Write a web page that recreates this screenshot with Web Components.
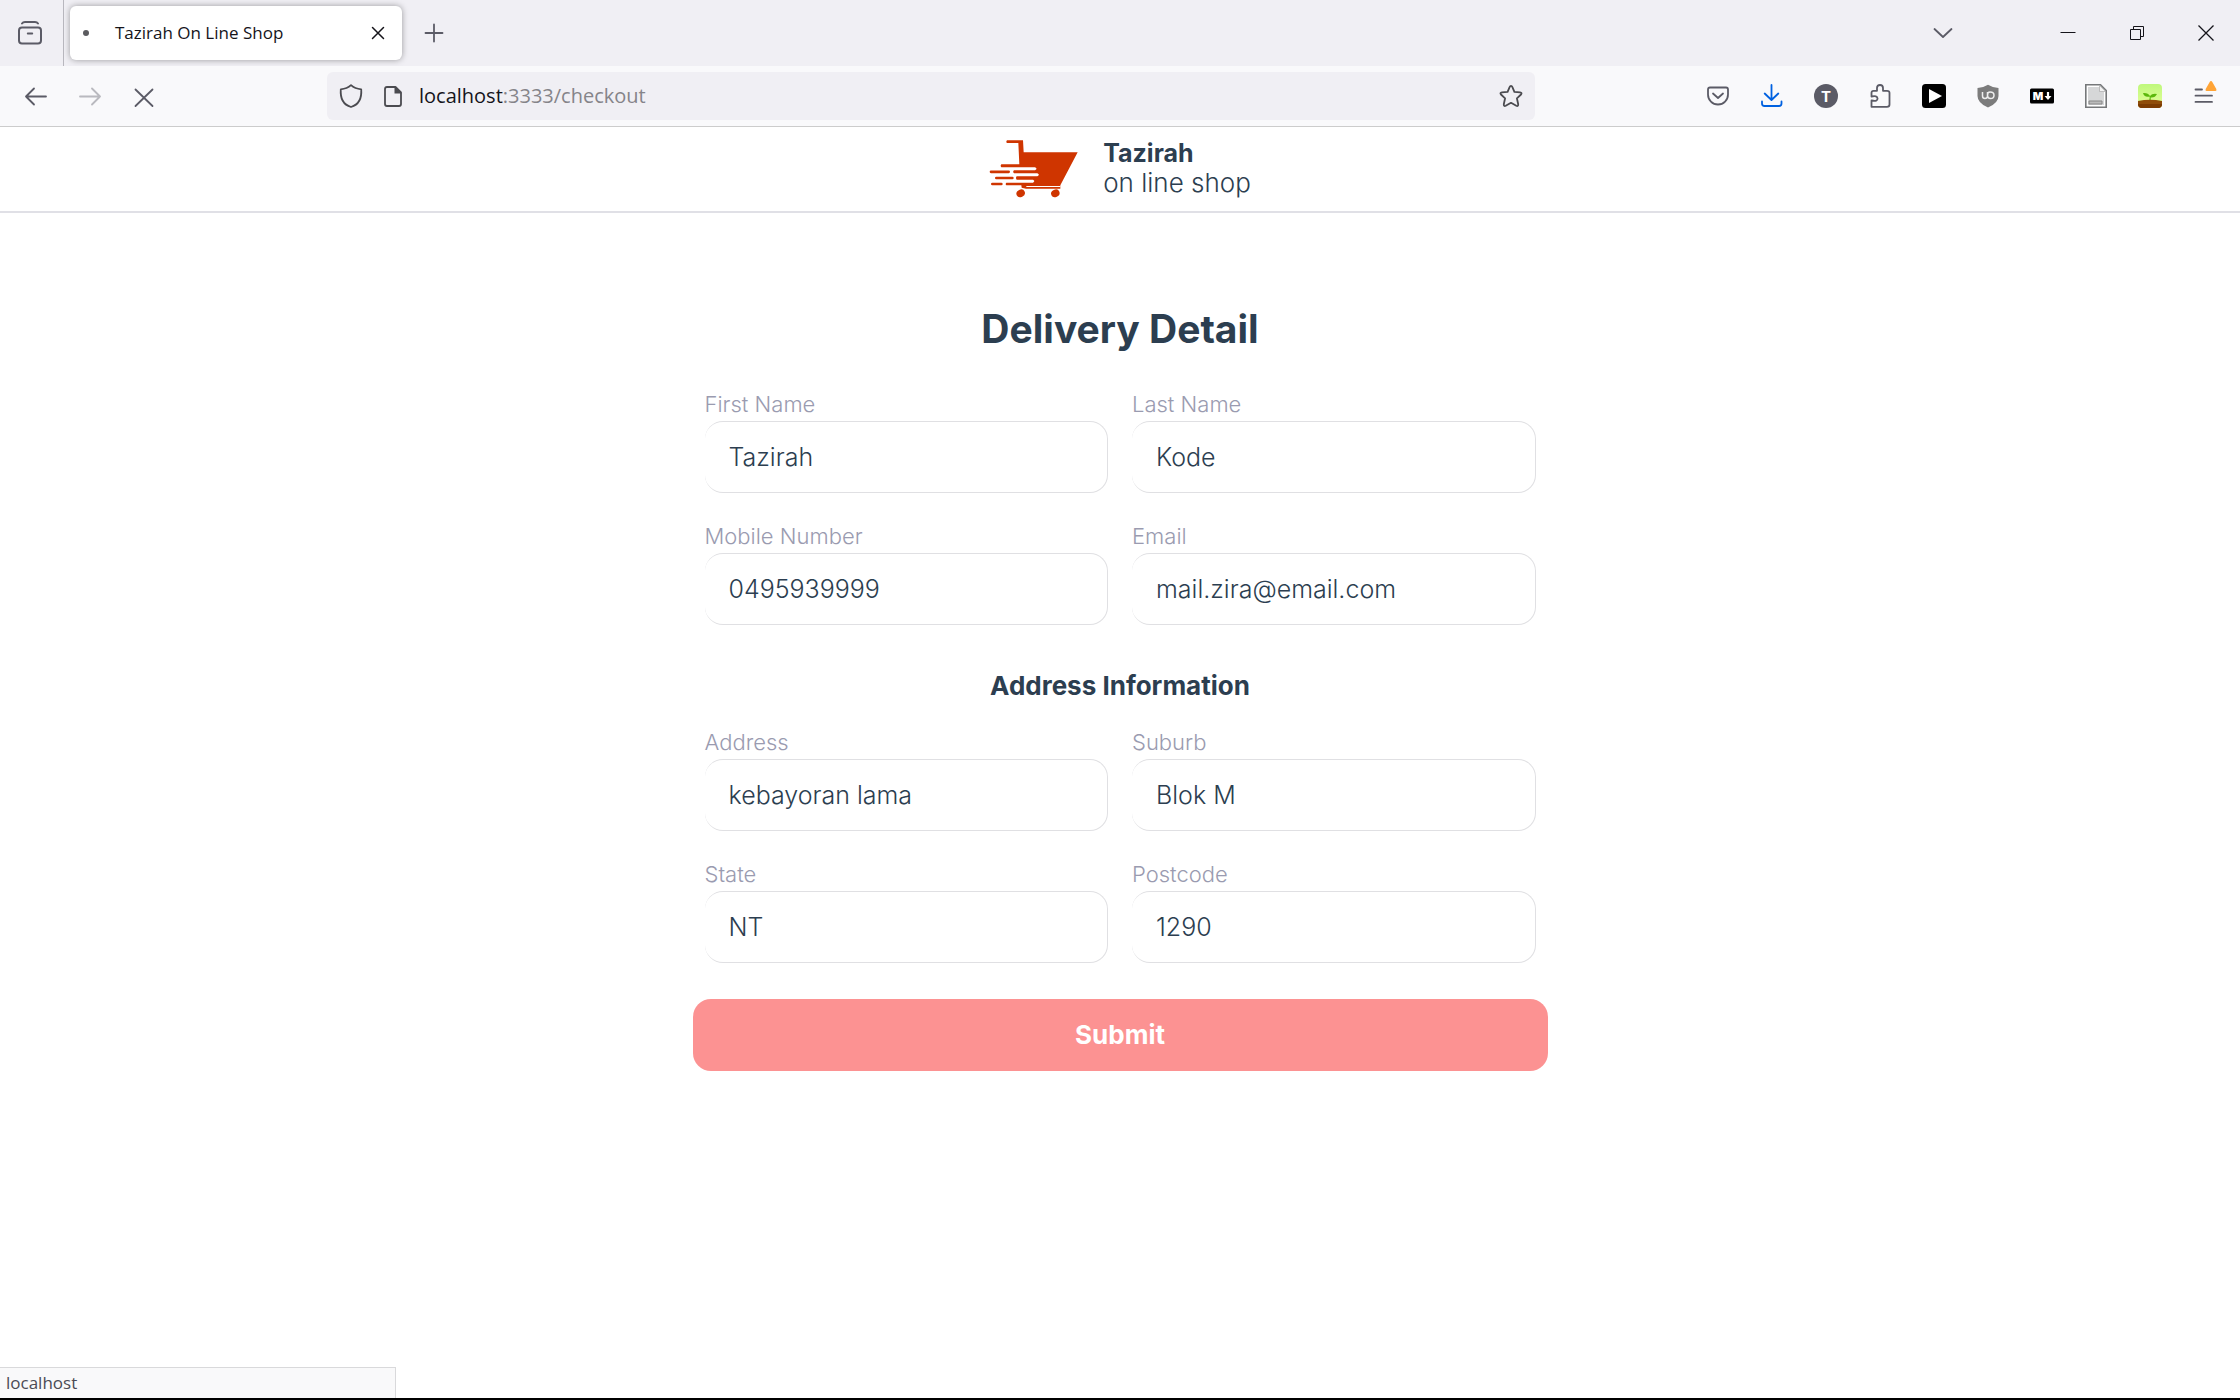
<!DOCTYPE html>
<html lang="en">
<head>
<meta charset="utf-8">
<title>Tazirah On Line Shop</title>
<style>
  html, body { margin: 0; }
  body { background: #fff; color: #2c3e50; font-family: Inter, "Liberation Sans", sans-serif; font-weight: 300; }
</style>
</head>
<body>
<browser-window>
  <tab-strip slot="tabs"><browser-tab slot="tab">Tazirah On Line Shop</browser-tab></tab-strip>
  <nav-toolbar slot="toolbar" host="localhost" path=":3333/checkout"></nav-toolbar>
  <shop-header><strong slot="name">Tazirah</strong><span slot="tagline">on line shop</span></shop-header>
  <delivery-form></delivery-form>
  <status-panel slot="status">localhost</status-panel>
</browser-window>

<script>
const define = (name, html, setup) => {
  const template = document.createElement('template');
  template.innerHTML = html;
  customElements.define(name, class extends HTMLElement {
    constructor() {
      super();
      this.attachShadow({ mode: 'open' }).append(template.content.cloneNode(true));
    }
    connectedCallback() { if (setup) setup(this, this.shadowRoot); }
  });
};

/* Every icon is drawn in a 24 x 24 box. */
const line = (d, w = 1.8) => `<path d="${d}" fill="none" stroke="currentColor" stroke-width="${w}" stroke-linecap="round" stroke-linejoin="round"/>`;
const ICONS = {
  archive: line('M1 9.500Q1 6.500 4 6.500H20Q23 6.500 23 9.500V19.500Q23 22.500 20 22.500H4Q1 22.500 1 19.500ZM4 2.500Q5 1 7 1H17Q19 1 20 2.500M9.800 12.500H14.200', 2),
  closeTab: line('M6.500 6.500L17.500 17.500M17.500 6.500L6.500 17.500', 1.5),
  plus: line('M12 3.500V20.500M3.500 12H20.500'),
  chevron: line('M3.500 8L12 16L20.500 8'),
  minimize: '<path d="M4.500 11.500H19.500" stroke="#15141a" fill="none"/>',
  restore: '<path d="M5.500 8.500H15.500V18.500H5.500ZM8.500 8.500V5.500H18.500V15.500H15.500" stroke="#15141a" fill="none"/>',
  closeWin: '<path d="M4.500 4.500L19.500 19.500M19.500 4.500L4.500 19.500" stroke="#15141a" stroke-width="1.300" fill="none"/>',
  back: line('M22 12.500H2M10 4.500L2 12.500L10 20.500'),
  forward: line('M2 12.500H22M14 4.500L22 12.500L14 20.500'),
  stop: line('M3.500 5.500L20.500 22M20.500 5.500L3.500 22'),
  shield: line('M12 1.200C9.500 3.500 5.500 5 1.800 5.300C1.200 13 3.500 20.500 12 23C20.500 20.500 22.800 13 22.200 5.300C18.500 5 14.500 3.500 12 1.200Z'),
  page: line('M14.500 3H6Q4 3 4 5V20Q4 22 6 22H18Q20 22 20 20V8.500Z') + '<path d="M13.500 2.500V9.500H20.500Z" fill="currentColor"/>',
  star: line('M12 1.900Q12.900 1.900 13.300 2.900L15.400 7.800L21 8.400Q23.500 9 22 10.500L17.900 14.300L19.200 20.200Q19.200 22.800 17.300 21.800L12 18.800L6.700 21.800Q4.800 22.800 4.800 20.200L6.100 14.300L2 10.500Q.5 9 3 8.400L8.600 7.800L10.700 2.900Q11.100 1.900 12 1.900Z'),
  pocket: line('M4 3.500H20Q22 3.500 22 5.500V10.500A10 10 0 0 1 2 10.500V5.500Q2 3.500 4 3.500ZM7 9.500L12 14L17 9.500'),
  download: line('M11.500 1V15.500M4.700 9.500L11.500 16L18.300 9.500M2 17.500V19.500Q2 22 4.500 22H19Q21.500 22 21.500 19.500V17.500'),
  account: '<circle cx="12" cy="12" r="12" fill="#5b5b66"/><text x="12" y="17.500" text-anchor="middle" font-size="15" font-weight="700" fill="#fff">T</text>',
  puzzle: line('M3.500 22.500V16.500Q10 18 9.500 14.200Q9.300 11.300 3.500 12.500V8.800Q3.500 6.800 5.500 6.800H9V4Q9 1 12 1Q15 1 15 4V6.800H19Q21.500 6.800 21.500 8.800V20.500Q21.500 22.800 19 22.800H3.500Z'),
  player: '<rect width="24" height="24" rx="3.500"/><path d="M7 5L20 12L7 19Z" fill="#fff"/>',
  blocker: '<path d="M12 .8Q16 3.500 22.500 4V12Q22.500 19 12 23.600Q1.500 19 1.500 12V4Q8 3.500 12 .8Z" fill="#7c7c7c"/><path d="M6.500 8V12Q6.500 14.500 9 14.500Q11 14.500 11.500 12.500V8M14 8Q18 8 18 11.200Q18 14.500 14.500 14.500Q11.500 14.500 11.500 11.200Q11.500 8 14 8Z" fill="none" stroke="#eee" stroke-width="1.500"/>',
  markdown: '<rect y="4.500" width="24" height="15" rx="1.500"/><text x="8" y="16" text-anchor="middle" font-size="11" font-weight="900" fill="#fff">M</text><path d="M16.900 8H19.100V12H21.500L18 16L14.500 12H16.900Z" fill="#fff"/>',
  document: '<path d="M1.800 .8H16.500L22.200 6.500V23.200H1.800Z" fill="#fff" stroke="#76787a" stroke-width="1.600"/><path d="M4 3H15L20 8V21H4Z" fill="#d6d7d8"/><path d="M15.500 1.500V7.500H21.500Z" fill="#f3f3f3" stroke="#aaa" stroke-width=".7"/><path d="M5 17H18V20H5Z" fill="#bbb" stroke="#888" stroke-width="1"/>',
  plant: '<defs><linearGradient id="sky" x2="0" y2="1"><stop stop-color="#bff87c"/><stop offset="1" stop-color="#e5ff9a"/></linearGradient><clipPath id="tile"><rect width="24" height="24" rx="4"/></clipPath></defs><g clip-path="url(#tile)"><path d="M0 0H24V24H0Z" fill="url(#sky)"/><path d="M0 17Q12 14.500 24 17V24H0Z" fill="#8f4c09"/><path d="M0 20H24V24H0Z" fill="#7c3b02"/></g><path d="M11.300 16Q12 13 11.500 12.500Q6 13.500 5 9Q10 8.500 12 12Q14 9.200 19 10Q17 14 12.700 13.500V16Z" fill="#5cb80c"/>',
  menu: line('M3.500 5.500H10M3.500 11.700H20M3.500 17.900H20') + '<path d="M19 -3Q19.800 -3 20.300 -2L24.300 5Q25 7 23.500 7H14.500Q13 7 13.700 5L17.700 -2Q18.200 -3 19 -3Z" fill="#ffa436"/>',
};

define('ui-icon', `
<style>
  :host { display: block; width: 24px; height: 24px; flex: none; }
  svg { display: block; width: 100%; height: 100%; overflow: visible; font-family: Inter, sans-serif; }
</style>
<svg viewBox="0 0 24 24" aria-hidden="true"></svg>`,
(el, root) => { root.querySelector('svg').innerHTML = ICONS[el.getAttribute('name')] || ''; });

define('icon-button', `
<style>
  :host { display: block; flex: none; width: 54px; height: 48px; color: #5b5b66; }
  button { display: flex; align-items: center; justify-content: center; width: 100%; height: 100%; padding: 0; border: 0; background: none; color: inherit; }
</style>
<button type="button"></button>`,
(el, root) => {
  root.querySelector('button').setAttribute('aria-label', el.getAttribute('label'));
  const icon = document.createElement('ui-icon');
  icon.setAttribute('name', el.getAttribute('icon'));
  root.querySelector('button').replaceChildren(icon);
});
</script>
<script>
define('browser-window', `
<style>
  :host { display: flex; flex-direction: column; min-height: 100vh; box-sizing: border-box; border-bottom: 2px solid #000; position: relative; }
  ::slotted([slot=status]) { position: absolute; left: 0; bottom: 0; }
</style>
<slot name="tabs"></slot><slot name="toolbar"></slot><slot></slot><slot name="status"></slot>`);

define('browser-tab', `
<style>
  :host { display: flex; align-items: center; box-sizing: border-box; width: 332px; height: 54px; padding: 0 12px 0 13px; border-radius: 6px;
    background: #fff; box-shadow: 0 0 6px rgba(0,0,0,.36); color: #15141a; font: 17px/26px "Open Sans", sans-serif; }
  .busy { width: 6px; height: 6px; border-radius: 50%; background: #5b5b5f; }
  .title { flex: 1; margin-left: 26px; white-space: nowrap; }
  icon-button { width: 24px; color: #15141a; }
</style>
<span class="busy"></span><span class="title"><slot></slot></span><icon-button icon="closeTab" label="Close tab"></icon-button>`);

define('tab-strip', `
<style>
  :host { display: flex; align-items: center; height: 66px; background: #f0eff4; }
  .view { display: flex; align-items: center; box-sizing: border-box; width: 64px; height: 100%; padding-left: 3px; border-right: 1px solid #b8b7be; margin-right: 6px; }
  .new { margin-left: 5px; }
  .list { margin: 0 63px 0 auto; }
  .window { width: 69px; }
</style>
<div class="view"><icon-button icon="archive" label="View"></icon-button></div>
<slot name="tab"></slot>
<icon-button class="new" icon="plus" label="New tab"></icon-button>
<icon-button class="list" icon="chevron" label="List all tabs"></icon-button>
<icon-button class="window" icon="minimize" label="Minimize"></icon-button>
<icon-button class="window" icon="restore" label="Restore"></icon-button>
<icon-button class="window" icon="closeWin" label="Close"></icon-button>`);

define('nav-toolbar', `
<style>
  :host { display: flex; align-items: center; height: 60px; padding: 0 9px; background: #f9f9fb; border-bottom: 1px solid #ccc; }
  .off { opacity: .4; }
  .address { display: flex; align-items: center; flex: 1; min-width: 0; height: 48px; box-sizing: border-box; margin: 0 156px; padding: 0 12px; border-radius: 6px; background: #f0eff4; color: #4b4b50; }
  .page { margin: 0 14px 0 18px; }
  .url { flex: 1; font: 20px/30px "Open Sans", sans-serif; color: #858489; white-space: nowrap; }
  .host { color: #15141a; }
  .download { color: #0061e0; }
</style>
<icon-button icon="back" label="Back"></icon-button>
<icon-button class="off" icon="forward" label="Forward"></icon-button>
<icon-button icon="stop" label="Stop"></icon-button>
<div class="address">
  <ui-icon name="shield"></ui-icon><ui-icon class="page" name="page"></ui-icon>
  <span class="url"><span class="host"></span><span class="path"></span></span>
  <ui-icon name="star"></ui-icon>
</div>
<icon-button icon="pocket" label="Save to Pocket"></icon-button>
<icon-button class="download" icon="download" label="Downloads"></icon-button>
<icon-button icon="account" label="Account"></icon-button>
<icon-button icon="puzzle" label="Extensions"></icon-button>
<icon-button icon="player" label="Player"></icon-button>
<icon-button icon="blocker" label="Blocker"></icon-button>
<icon-button icon="markdown" label="Markdown"></icon-button>
<icon-button icon="document" label="Document"></icon-button>
<icon-button icon="plant" label="Plant"></icon-button>
<icon-button icon="menu" label="Menu"></icon-button>`,
(el, root) => {
  root.querySelector('.host').textContent = el.getAttribute('host');
  root.querySelector('.path').textContent = el.getAttribute('path');
});

define('shop-header', `
<style>
  :host { display: flex; align-items: center; justify-content: center; gap: 24px; height: 84px; border-bottom: 2px solid #e0e0e6; }
  svg { display: block; width: 90px; height: 60px; }
  .brand { display: flex; flex-direction: column; font-size: 26px; line-height: 29px; padding-bottom: 2px; }
  ::slotted(strong) { font-size: 25px; font-weight: 700; }
</style>
<svg viewBox="90 57 270 180" role="img" aria-label="Shopping cart">
  <path d="M144 61H192L194 97H356L304 196V206H201L188 203L187 196H142Q138 192 142 188H222Q230 183 222 179H173Q169 174 173 169H235Q244 164 235 160H165Q160 155 165 151H228Q237 146 228 142H127Q123 137 127 133H181L178 69H144Q140 65 144 61Z" fill="#cf3500"/>
  <path d="M96 155.500H149M112 174H160M100 192H127" stroke="#cf3500" stroke-width="8" stroke-linecap="round"/>
  <path d="M202 199.500H304" stroke="#fff" stroke-width="3"/>
  <ellipse cx="185" cy="220" rx="13" ry="11" transform="rotate(-25 185 220)" fill="#cf3500"/>
  <ellipse cx="289" cy="220" rx="13" ry="11" transform="rotate(-25 289 220)" fill="#cf3500"/>
</svg>
<div class="brand"><slot name="name"></slot><slot name="tagline"></slot></div>`);

define('text-field', `
<style>
  :host { display: block; padding: 0 12px 30px; }
  label { display: block; font-size: 22px; line-height: 26px; height: 30px; color: #9a9bb0; }
  input { display: block; box-sizing: border-box; width: 100%; height: 72px; padding: 0 24px; border: 1px solid #e0e0e3; border-left-width: 0; border-radius: 18px;
    background: #fff; color: #2c3e50; font: 300 25px/30px Inter, "Liberation Sans", sans-serif; outline: 0; }
</style>
<label for="control"></label><input id="control">`,
(el, root) => {
  root.querySelector('label').textContent = el.getAttribute('label');
  const input = root.querySelector('input');
  input.type = el.getAttribute('type') || 'text';
  input.value = el.getAttribute('value');
});

define('delivery-form', `
<style>
  :host { display: block; padding: 95px 24px 72px; }
  form { max-width: 855px; margin: 0 auto; }
  h1 { margin: 0 0 41px; font-size: 39px; line-height: 42px; text-align: center; }
  h2 { margin: 16px 0 28px; font-size: 26px; line-height: 30px; text-align: center; }
  .grid { display: grid; grid-template-columns: 1fr 1fr; }
  button { display: block; width: 100%; height: 72px; margin: 6px 0 0; border: 0; border-radius: 18px; background: #fc9292; color: #fff; font: 700 26px/30px Inter, "Liberation Sans", sans-serif; }
</style>
<form>
  <h1>Delivery Detail</h1>
  <div class="grid">
    <text-field label="First Name" value="Tazirah"></text-field>
    <text-field label="Last Name" value="Kode"></text-field>
    <text-field label="Mobile Number" type="tel" value="0495939999"></text-field>
    <text-field label="Email" type="email" value="mail.zira@email.com"></text-field>
  </div>
  <h2>Address Information</h2>
  <div class="grid">
    <text-field label="Address" value="kebayoran lama"></text-field>
    <text-field label="Suburb" value="Blok M"></text-field>
    <text-field label="State" value="NT"></text-field>
    <text-field label="Postcode" value="1290"></text-field>
  </div>
  <button type="submit">Submit</button>
</form>`);

define('status-panel', `
<style>
  :host { display: block; box-sizing: border-box; width: 396px; height: 31px; padding: 0 6px; border: 1px solid #d9d9db; border-width: 1px 1px 0 0; background: #f9f9fa; color: #4b4b55; font: 17px/30px "Open Sans", sans-serif; }
</style>
<slot></slot>`);
</script>
</body>
</html>
